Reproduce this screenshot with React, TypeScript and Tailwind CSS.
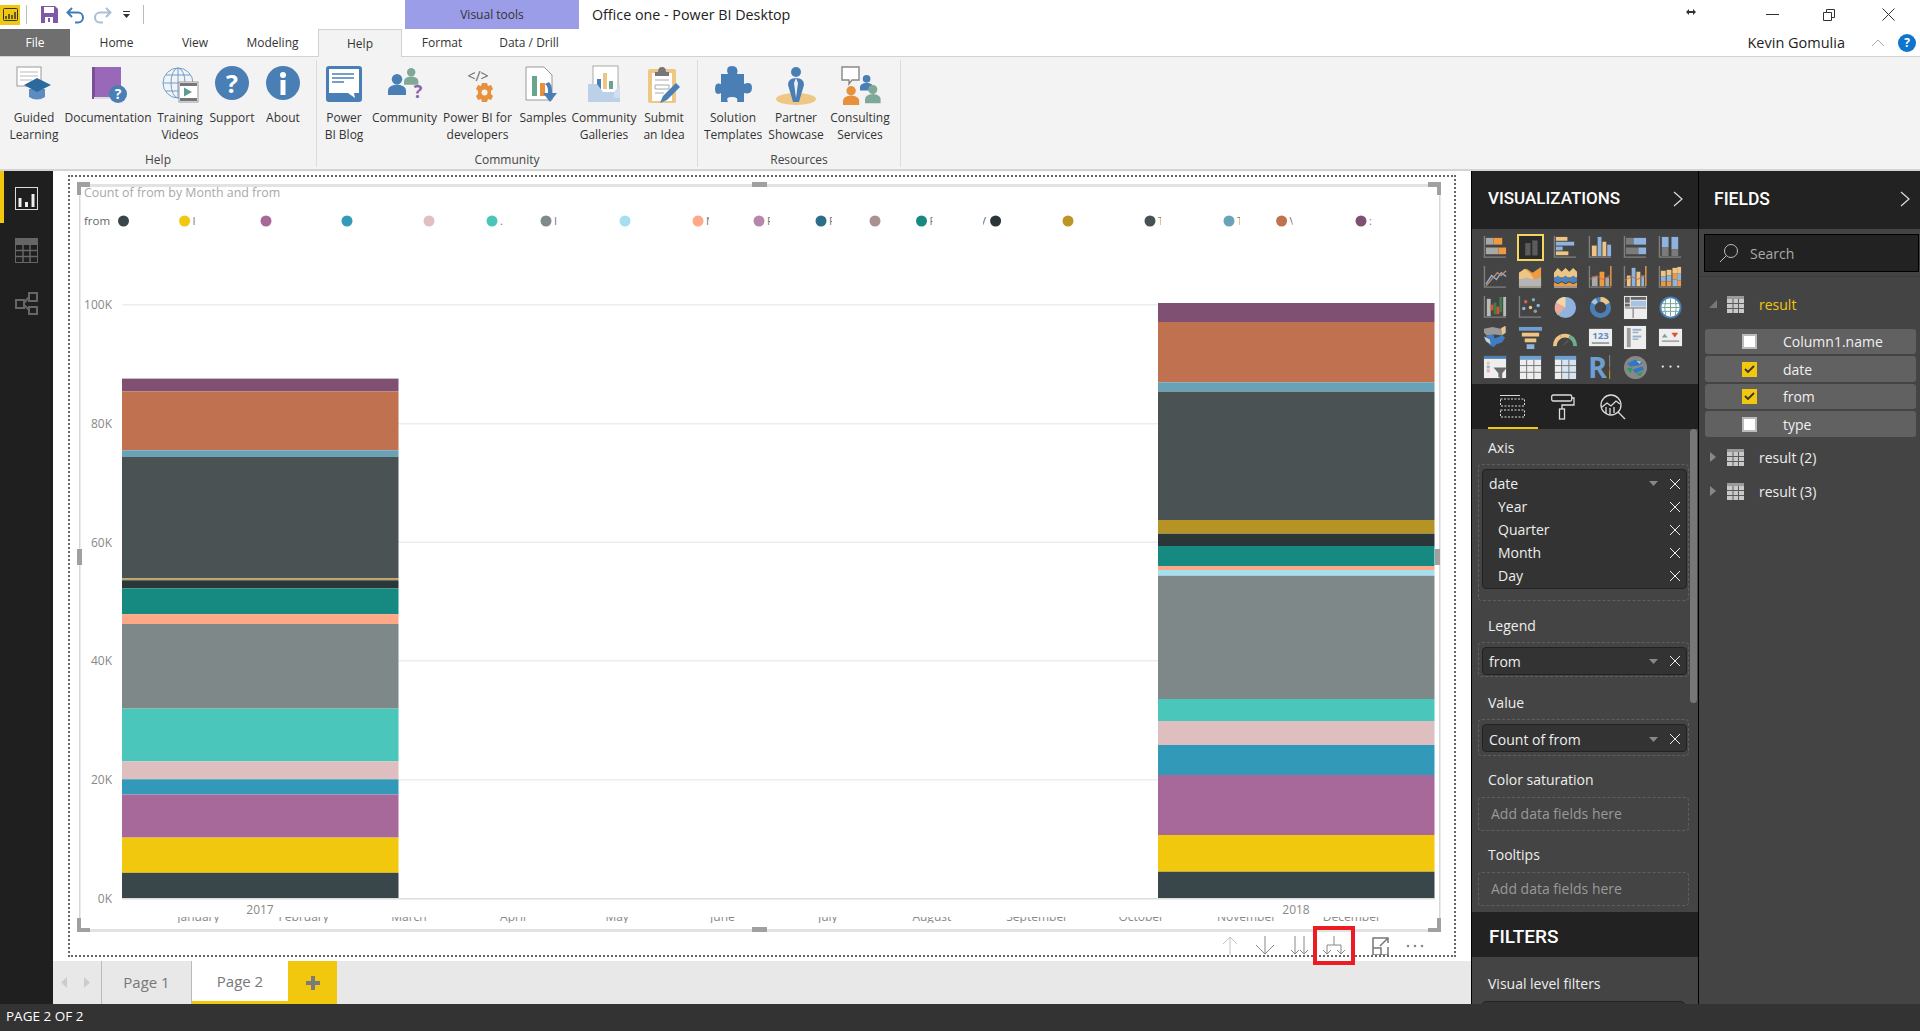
import React from "react";

const S = (p: { w: number; h?: number; v?: string; c?: string; children: React.ReactNode }) => (
  <svg width={p.w} height={p.h ?? p.w} viewBox={p.v ?? `0 0 ${p.w} ${p.h ?? p.w}`} className={`overflow-visible ${p.c ?? "block shrink-0"}`}>{p.children}</svg>
);

const BL = "#8db3de", TN = "#eec584", OR = "#ee9a41", GY = "#a8a8a8", DG = "#7b7b7b";
const Ax = () => <path d="M1.5 1V23H24" fill="none" stroke="#808080" strokeWidth="1.4" />;
const R = (x: number, y: number, w: number, h: number, f: string) => <rect x={x} y={y} width={w} height={h} fill={f} />;

const vizIcons: React.ReactNode[] = [
  <><Ax />{R(3, 3, 8, 7, GY)}{R(11, 3, 9, 7, OR)}{R(3, 13, 13, 7, GY)}{R(16, 13, 8, 7, OR)}</>,
  <>{R(7, 8, 6, 14, "#5c5c5c")}{R(15, 5, 6, 17, "#5c5c5c")}</>,
  <><Ax />{R(3, 2, 12, 4, TN)}{R(3, 7, 19, 4, BL)}{R(3, 12, 7, 4, BL)}{R(3, 17, 13, 4, TN)}</>,
  <><Ax />{R(4, 11, 5, 11, TN)}{R(10, 2, 4, 20, BL)}{R(15, 7, 4, 15, TN)}{R(20, 10, 4, 12, BL)}</>,
  <><Ax />{R(3, 3, 8, 7, DG)}{R(11, 3, 13, 7, BL)}{R(3, 13, 13, 7, DG)}{R(16, 13, 8, 7, BL)}</>,
  <><Ax />{R(4, 2, 7, 11, BL)}{R(4, 13, 7, 9, DG)}{R(14, 2, 7, 13, BL)}{R(14, 15, 7, 7, DG)}</>,
  <><Ax /><path d="M3 20 9 11l5 4 5-7 5 4" fill="none" stroke={BL} strokeWidth="1.4" /><path d="M3 22 9 15l6-7 4 3 5-5" fill="none" stroke="#c08a6b" strokeWidth="1.4" /></>,
  <>{R(1, 22, 23, 2, "#999")}<path d="M1 8 9 4l6 4 9-6v20H1z" fill={OR} /><path d="M1 8 7 4l6 5 4 6-16 0z" fill={TN} /><path d="M1 15 9 13l7 2 8-2v9H1z" fill="#b5b5b5" /></>,
  <>{R(1, 22, 24, 2, "#999")}<path d="M1 8 5 3l4 4 4-4 4 4 4-4 4 4v6H1z" fill={TN} /><path d="M1 14l4-3 4 3 4-3 4 3 4-3 4 3v3l-4 2-4-2-4 2-4-2-4 2-4-2z" fill="#4d82c0" /><path d="M1 18l4 2 4-2 4 2 4-2 4 2 4-2v4H1z" fill={OR} /></>,
  <><Ax />{R(4, 12, 6, 10, "#a9a9a9")}{R(12, 7, 5, 15, OR)}{R(18, 13, 4, 9, "#a9a9a9")}{R(23, 1, 1.5, 21, OR)}<path d="M2 15l7-4 6 4 8-4" fill="none" stroke="#c9694a" strokeWidth="1" /></>,
  <><Ax />{R(4, 11, 4, 11, TN)}{R(9, 3, 4, 19, BL)}{R(14, 7, 4, 15, TN)}{R(19, 11, 3, 11, BL)}{R(23, 1, 1.5, 21, OR)}<path d="M2 16l7-4 6 3 8-4" fill="none" stroke="#c9694a" strokeWidth="1" /></>,
  <><Ax />{R(3, 6, 5, 6, TN)}{R(3, 12, 5, 5, BL)}{R(3, 17, 5, 5, OR)}{R(9, 5, 5, 6, TN)}{R(9, 11, 5, 6, BL)}{R(9, 17, 5, 5, OR)}{R(15, 3, 5, 6, TN)}{R(15, 9, 5, 6, OR)}{R(15, 15, 5, 7, BL)}{R(20, 2, 4, 7, TN)}{R(20, 9, 4, 7, BL)}{R(20, 16, 4, 6, OR)}</>,
  <><Ax />{R(4, 4, 4, 18, "#bbb")}{R(8, 10, 3, 6, "#d9542e")}{R(11, 8, 3, 12, "#3e7e4d")}{R(14, 12, 3, 8, "#d9542e")}{R(17, 2, 3, 16, "#3e7e4d")}{R(21, 2, 3, 20, "#bbb")}</>,
  <><Ax /><circle cx="6" cy="14" r="1.8" fill={BL} /><circle cx="8" cy="7" r="1.8" fill="#d5654b" /><circle cx="13" cy="13" r="1.8" fill={TN} /><circle cx="16" cy="5" r="1.8" fill="#7fb09d" /><circle cx="18" cy="17" r="1.8" fill="#9a9a9a" /><circle cx="21" cy="11" r="1.8" fill={BL} /></>,
  <><circle cx="13" cy="13" r="11" fill={BL} /><path d="M13 13 13 2A11 11 0 0 0 3 8z" fill="#f3d6a6" /><path d="M13 13 3 8A11 11 0 0 0 5 21z" fill="#e9a99b" /></>,
  <><circle cx="13" cy="13" r="8.5" fill="none" stroke="#4a7fb8" strokeWidth="5" /><path d="M13 4.5a8.5 8.5 0 0 1 7.5 4.5" fill="none" stroke={TN} strokeWidth="5" /><path d="M5.5 9A8.5 8.5 0 0 1 9 5.5" fill="none" stroke="#a5c2e2" strokeWidth="5" /></>,
  <>{R(1, 1, 24, 24, "#eee")}{R(2, 2, 5, 6, "#666")}{R(8, 2, 16, 3, "#666")}{R(2, 9, 5, 3, "#666")}{R(8, 6, 16, 6, "#a6c3e2")}{R(2, 13, 22, 1, "#666")}{R(10, 14, 1, 10, "#666")}</>,
  <><circle cx="13" cy="13" r="11.5" fill="#4a7fb8" /><circle cx="13" cy="13" r="9.5" fill="#fff" /><path d="M4 9h18M3 13h20M4 17h18M13 4v18M8 5q-2 8 0 16M18 5q2 8 0 16" fill="none" stroke="#6ea995" strokeWidth="1" /></>,
  <><path d="M1 4l9-2 8 2 6-3v7l-4 3-8-1-8 1-3-3z" fill="#999" /><path d="M3 11l8-1 1 4 8-3 3 2-3 5-6 2-3 3-4-2-3-4z" fill="#3f7ec4" /><path d="M19 3l4-2v7l-3 2z" fill={TN} /><path d="M1 12l6 3 1 5-5-3z" fill="#cfcfcf" /></>,
  <>{R(1, 2, 24, 4, "#6f9fd0")}{R(4, 8, 18, 4, TN)}{R(7, 14, 12, 4, TN)}{R(9, 20, 8, 5, BL)}</>,
  <><path d="M2 22a11 11 0 0 1 6-10" fill="none" stroke={TN} strokeWidth="4" /><path d="M8 12a11 11 0 0 1 9 0" fill="none" stroke={TN} strokeWidth="4" /><path d="M17 12a11 11 0 0 1 6 10" fill="none" stroke="#71ab92" strokeWidth="4" /><path d="M11 21l5-5" stroke="#555" strokeWidth="2" /></>,
  <>{R(1, 4, 24, 18, "#eee")}<text x="13" y="15" textAnchor="middle" fontSize="10" fontWeight="700" fill="#5e8fc5" fontFamily="Open Sans, sans-serif">123</text>{R(4, 18, 18, 1.5, "#888")}</>,
  <>{R(1, 1, 23, 24, "#eee")}{R(4, 3, 4, 20, "#9c9c9c")}{R(10, 4, 9, 2, BL)}{R(10, 7, 6, 1.5, "#aaa")}{R(10, 11, 9, 2, BL)}{R(10, 14, 6, 1.5, "#aaa")}</>,
  <>{R(1, 4, 24, 18, "#eee")}<path d="M4 13l3-4 3 4z" fill="#6ea995" /><path d="M14 8h7l-3.5 5z" fill="#d9542e" />{R(4, 16, 18, 1.5, "#999")}</>,
  <>{R(1, 1, 23, 23, "#eee")}{R(1, 1, 23, 3, "#4a7fb8")}{R(4, 7, 3, 3, TN)}{R(4, 11, 3, 3, BL)}{R(4, 15, 3, 3, "#e9a99b")}<path d="M11 13h14l-5 6v6l-4-2v-4z" fill="#6b6b6b" /></>,
  <>{R(2, 1, 22, 24, "#eee")}{R(2, 1, 22, 4, "#6f9fd0")}<path d="M9 5v20M16.5 5v20M2 11h22M2 18h22" stroke="#777" strokeWidth="1" /></>,
  <>{R(2, 1, 22, 24, "#d7e4f2")}{R(2, 1, 22, 4, "#6f9fd0")}{R(2, 5, 7, 20, "#eee")}<path d="M9 5v20M16.5 5v20M2 11h22M2 18h22" stroke="#777" strokeWidth="1" /></>,
  <><text x="10" y="24" textAnchor="middle" fontSize="30" fontWeight="700" fill="#6f9fd0" fontFamily="Open Sans, sans-serif">R</text>{R(22, 0, 1, 13, "#888")}{R(22, 13, 1, 3, "#d9442e")}{R(22, 16, 1, 9, "#c89b22")}</>,
  <><circle cx="13" cy="13" r="12" fill="#888" /><path d="M4 9l8-4 9 3-5 3-8 1zM10 15l10-3 2 3-9 4z" fill="#2f78c4" /><path d="M4 14l6-1-2 6zM14 20l7-3-3 5z" fill="#2d9a5e" /><path d="M14 6l5 1-2 2z" fill="#ccc" /></>,
  <><circle cx="5" cy="12" r="1.2" fill="#eee" /><circle cx="13" cy="12" r="1.2" fill="#eee" /><circle cx="21" cy="12" r="1.2" fill="#eee" /></>,
];

const Person = ({ x, y, c, s = 1 }: { x: number; y: number; c: string; s?: number }) => (
  <g transform={`translate(${x} ${y}) scale(${s})`} fill={c}>
    <circle cx="6" cy="3.5" r="3.5" />
    <path d="M0 14V11q0-3.5 6-4 6 .5 6 4v3z" />
  </g>
);

const Q = ({ x, y, c = "#fff", z = 13 }: { x: number; y: number; c?: string; z?: number }) => (
  <text x={x} y={y} textAnchor="middle" fontSize={z} fontWeight="700" fill={c} fontFamily="Open Sans, sans-serif">?</text>
);

const ribbon = {
  guided: <><rect x="1" y="1" width="24" height="19" fill="#fff" stroke="#9a9a9a" /><path d="M4 6h18M4 10h18M4 14h12" stroke="#bbb" /><path d="M13 23v8q8 5 16 0v-8z" fill="#5c8cc2" /><path d="M8 19 21 12l14 7-14 7z" fill="#2d6a9c" /></>,
  docs: <><rect x="1" y="1" width="29" height="32" fill="#9a68b8" /><rect x="1" y="1" width="3" height="32" fill="#7b4f98" /><rect x="3" y="31" width="27" height="2" fill="#ddd" /><circle cx="27" cy="28" r="9" fill="#4a7fb5" /><Q x={27} y={33} z={14} /></>,
  training: <><g fill="none" stroke="#6f9fd0" strokeWidth="1"><circle cx="16" cy="17" r="15" /><ellipse cx="16" cy="17" rx="7" ry="15" /><path d="M1 17h30M4 9h24M4 25h24M16 2v30" /></g><rect x="17" y="16" width="19" height="20" fill="#fff" stroke="#999" /><rect x="18" y="17" width="17" height="3" fill="#777" /><rect x="18" y="32" width="17" height="3" fill="#777" /><path d="M22 21.5v9l8-4.5z" fill="#5c9e8c" /></>,
  support: <><circle cx="17" cy="17" r="17" fill="#4a7fb5" /><Q x={17} y={27} z={25} /></>,
  about: <><circle cx="17" cy="17" r="17" fill="#4a7fb5" /><circle cx="17" cy="9" r="3" fill="#fff" /><rect x="14.5" y="14" width="5" height="15" fill="#fff" /></>,
  blog: <><rect x="0" y="0" width="36" height="36" rx="3" fill="#4a7fb5" /><path d="M3 3h30v24h-5l1 5-7-5H3z" fill="#fff" /><path d="M6 8h22M6 12h22M6 16h12" stroke="#4a7fb5" strokeWidth="1.4" /></>,
  community: <><Person x={17} y={2} c="#7fa898" s={1.2} /><Person x={1} y={8} c="#4a7fb5" s={1.5} /><Q x={31} y={32} c="#8b5fae" z={18} /></>,
  dev: <><text x="18" y="15" textAnchor="middle" fontSize="14" fill="#666" fontFamily="Open Sans, sans-serif">&lt;/&gt;</text><path d="M22 17h5l1 3 3-1 2 4-2 2v3l2 2-2 4-3-1-1 3h-5l-1-3-3 1-2-4 2-2v-3l-2-2 2-4 3 1z" fill="#e8913c" /><circle cx="24.5" cy="26.5" r="3" fill="#f3f3f3" /></>,
  samples: <><path d="M1 1h18l8 8v25H1z" fill="#fff" stroke="#999" /><rect x="7" y="10" width="5" height="20" fill="#6aa48e" /><rect x="15" y="17" width="5" height="13" fill="#e8913c" /><path d="M24 16q3 3 3 9v2h5l-7 9-7-9h5v-2q0-5-3-7z" fill="#4a7fb5" /></>,
  gallery: <><rect x="5" y="0" width="25" height="28" fill="#fff" stroke="#aaa" /><rect x="9" y="13" width="4" height="10" fill="#4a7fb5" /><rect x="15" y="7" width="4" height="16" fill={TN} /><rect x="21" y="15" width="4" height="8" fill="#6aa48e" /><path d="M0 18h9l6 8h17v10H0z" fill="#bcd0e8" /><path d="M26 32V26l6-7v13z" fill="#cfdff0" /></>,
  idea: <><rect x="0" y="3" width="28" height="34" rx="2" fill="#eec784" /><rect x="4" y="7" width="20" height="28" fill="#fff" /><path d="M7 6h3q0-5 4-5t4 5h3v4H7z" fill="#777" /><path d="M7 14h14M7 19h14v4H7zM7 27h9" fill="none" stroke="#aaa" /><path d="M12 37l3-7 13-13 4 4-13 13z" fill="#4a7fb5" /></>,
  puzzle: <path d="M6 8h7q-3-8 4-8t5 8h7v10q8-3 8 4t-8 5v9h-7q2-5-5-5t-4 5H6v-9q-6 3-6-4t6-5z" fill="#4a7fb5" />,
  partner: <><ellipse cx="20" cy="33" rx="20" ry="6" fill="#eec784" /><circle cx="20" cy="6" r="5" fill="#4a7fb5" /><path d="M12 19q0-7 8-7t8 7l-3 10-2 7h-6l-2-7z" fill="#4a7fb5" /><path d="M20 12l-2 5 2 15 2-15z" fill="#eaf0f6" /></>,
  consulting: <><path d="M1 1h17v13h-7l-3 4v-4H1z" fill="#fff" stroke="#888" strokeWidth="1.4" transform="translate(1 0)" /><Person x={20} y={9} c="#4a7fb5" s={1.1} /><Person x={3} y={20} c="#e8913c" s={1.35} /><Person x={25} y={19} c="#7fa898" s={1.3} /></>,
};

const RI = ({ w, l, i, vw = 36 }: { w: string; l: string[]; i: React.ReactNode; vw?: number }) => (
  <div className={`${w} flex flex-col items-center shrink-0`}>
    <S w={40} h={38} v={`${(vw - 40) / 2} 0 40 38`}>{i}</S>
    <div className="mt-[5px] text-center leading-[17px] text-[12px] text-[#333] whitespace-nowrap">
      {l.map((t) => <div key={t}>{t}</div>)}
    </div>
  </div>
);

const Group = ({ name, w, children }: { name: string; w: string; children: React.ReactNode }) => (
  <div className={`${w} h-full flex flex-col shrink-0 border-r border-[#dcdcdc]`}>
    <div className="flex h-[90px] pt-[6px] shrink-0">{children}</div>
    <div className="text-center text-[12px] leading-[19px] text-[#444] shrink-0">{name}</div>
  </div>
);

const Tab = ({ w, children }: { w: string; children: React.ReactNode }) => (
  <div className={`${w} h-full flex items-center justify-center text-[12px] text-[#333] shrink-0`}>{children}</div>
);

const Xx = ({ c = "#eee" }: { c?: string }) => (
  <S w={12}><path d="M1 1l10 10M11 1 1 11" stroke={c} strokeWidth="1" /></S>
);
const Caret = () => <S w={9} h={5}><path d="M0 0h9L4.500 5z" fill="#888" /></S>;
const Chevron = ({ c }: { c: string }) => (
  <S w={10} h={16} c={c}><path d="M1 1l8 7-8 7" fill="none" stroke="#ddd" strokeWidth="1.2" /></S>
);

const Pill = ({ t, caret, sub, first }: { t: string; caret?: boolean; sub?: boolean; first?: boolean }) => (
  <div className={`${sub ? "h-[23px] pl-[15px]" : first ? "h-[23px] pl-[6px]" : "h-[24px] pl-[6px]"} flex items-center pr-[5px] text-[14px] text-[#eee]`}>
    <span className="flex-1 whitespace-nowrap">{t}</span>
    {caret && <span className="mr-[11px]"><Caret /></span>}
    <Xx />
  </div>
);

const WellLabel = ({ t, mt }: { t: string; mt: string }) => (
  <div className={`${mt} pl-[16px] h-[22px] leading-[22px] text-[14px] text-[#eee] whitespace-nowrap`}>{t}</div>
);

const Well = ({ children, pb }: { children: React.ReactNode; pb: string }) => (
  <div className={`mt-[5px] ml-[6px] w-[211px] border border-dashed border-[#5f5f5f] rounded-[4px] pl-[3px] pr-[1px] pt-[4px] ${pb}`}>
    <div className="bg-[#333] border border-[#222] rounded-[4px]">{children}</div>
  </div>
);

const Empty = ({ mt }: { mt: string }) => (
  <div className={`${mt} ml-[6px] w-[211px] h-[34px] border border-dashed border-[#5f5f5f] rounded-[4px] pl-[12px] pb-[2px] flex items-center text-[14px] text-[#999]`}>Add data fields here</div>
);

const TableIcon = () => (
  <S w={17}>
    <rect x="0" y="0" width="17" height="17" fill="#c9c9c9" />
    <rect x="0" y="0" width="17" height="3" fill="#9a9a9a" />
    <path d="M6 3v14M11.500 3v14M0 7.500h17M0 12.500h17" stroke="#5a5a5a" strokeWidth="1" />
  </S>
);

const Field = ({ t, on, h, mb }: { t: string; on?: boolean; h: string; mb: string }) => (
  <div className={`${h} ${mb} ml-[6px] w-[211px] bg-[#616161] rounded-[3px] flex items-center pl-[37px] text-[14px] text-[#f0f0f0]`}>
    {on ? (
      <span className="w-[15px] h-[15px] bg-[#f2c80f] flex items-center justify-center shrink-0">
        <S w={11} h={9}><path d="M1 4l3 3 6-6" fill="none" stroke="#333" strokeWidth="1.8" /></S>
      </span>
    ) : (
      <span className="w-[15px] h-[15px] bg-white border-2 border-[#bbb] shrink-0" />
    )}
    <span className="ml-[26px] whitespace-nowrap">{t}</span>
  </div>
);

const TreeRow = ({ t, open, y }: { t: string; open?: boolean; y: string }) => (
  <div className={`${y} h-[24px] flex items-center text-[14px] ${open ? "text-[#f2c80f]" : "text-[#eee]"}`}>
    <span className={`w-[28px] ${open ? "pl-[10px]" : "pl-[11px]"}`}>
      {open ? <S w={8}><path d="M8 0v8H0z" fill="#777" /></S> : <S w={6} h={10}><path d="M0 0l6 5-6 5z" fill="#888" /></S>}
    </span>
    <TableIcon />
    <span className="ml-[15px] whitespace-nowrap">{t}</span>
  </div>
);

const segs2017: [number, string][] = [[378.6, "#7f5072"], [391.4, "#bf7150"], [450.3, "#69a1b6"], [456.9, "#4a5254"], [578.3, "#b8a35c"], [580.3, "#2b3638"], [588.3, "#168980"], [614.1, "#fda988"], [624, "#7f8889"], [708.6, "#4ac6bb"], [761.4, "#dfbebf"], [779.3, "#3399b9"], [794.5, "#a66999"], [837.6, "#f2c80f"], [872.8, "#39474b"]];
const segs2018: [number, string][] = [[303, "#7f5072"], [322, "#bf7150"], [382.3, "#69a1b6"], [391.7, "#4a5254"], [520, "#b59325"], [533.7, "#2b3638"], [546, "#168980"], [566, "#fda988"], [570, "#a5dff0"], [575.7, "#7f8889"], [699, "#4ac6bb"], [721, "#dfbebf"], [745, "#3399b9"], [775, "#a66999"], [835, "#f2c80f"], [871.7, "#39474b"]];

const dots: [number, string, string?][] = [[123.5, "#374649"], [184.6, "#f2c80f", "I"], [266, "#a66999"], [347, "#3599b8"], [429, "#dfbfbf"], [492, "#4ac5bb", "."], [546, "#7e8a8b", "I"], [625, "#a5dff0"], [698, "#fea987", "N"], [759, "#b787ab", "F"], [821, "#2a6e8a", "F"], [875, "#a99191"], [921.5, "#168980", "F"], [995.6, "#293537"], [1068, "#bb9626"], [1150, "#475052", "T"], [1229, "#6aa2b8", "T"], [1281.6, "#c0724f", "V"], [1361, "#7f5072", ":"]];
const months = [[162, "January"], [248, "February"], [334, "March"], [419, "April"], [504, "May"], [590, "June"], [676, "July"], [761, "August"], [847, "September"], [932, "October"], [1018, "November"], [1104, "December"]] as [number, string][];

const bars = (segs: [number, string][], x: number, bottom: number) =>
  segs.map(([y, c], i) => {
    const next = i + 1 < segs.length ? segs[i + 1][0] : bottom;
    return <rect key={x + "-" + i} x={x} y={y} width={276.500} height={next - y} fill={c} />;
  });

const hc = "#a0a0a0";
const Chart = () => (
  <svg width="1384" height="778" viewBox="70 177 1384 778" className="block" fontFamily="Open Sans, sans-serif">
    <defs>
      <clipPath id="mclip"><rect x="100" y="917" width="1340" height="6" /></clipPath>
      {dots.map(([x], i) => <clipPath key={x} id={`lg${i}`}><rect x={x + 7.500} y="214" width="3.500" height="14" /></clipPath>)}
      <clipPath id="lgs"><rect x="983" y="214" width="4" height="14" /></clipPath>
    </defs>
    <rect x="79" y="184" width="1361" height="3" fill="#e2e2e2" />
    <rect x="79" y="929" width="1361" height="3" fill="#e2e2e2" />
    <rect x="79" y="184" width="1.500" height="748" fill="#d8d8d8" />
    <rect x="1439" y="184" width="1.500" height="748" fill="#d8d8d8" />
    <path d="M77 195V182H90V187H81V195zM1441 195V182H1428V187H1437V195zM77 918V932H90V928H81V918zM1441 918V932H1428V928H1437V918z" fill={hc} />
    <rect x="752" y="182" width="15" height="5" fill={hc} />
    <rect x="752" y="927" width="15" height="5" fill={hc} />
    <rect x="77" y="549" width="5" height="16" fill={hc} />
    <rect x="1435" y="549" width="5" height="16" fill={hc} />

    <text x="84" y="196.500" fontSize="12.400" fill="#a8a8a8">Count of from by Month and from</text>
    <text x="84" y="225" fontSize="11.500" fontWeight="500" fill="#666">from</text>
    {dots.map(([x, c, f], i) => (
      <g key={x}>
        <circle cx={x} cy="221" r="5.500" fill={c} />
        {f && <text x={x + 8} y="225" fontSize="11" fill="#777" clipPath={`url(#lg${i})`}>{f}</text>}
      </g>
    ))}
    <text x="982" y="225" fontSize="11" fill="#557" clipPath="url(#lgs)">/</text>
    {[304, 423, 541.500, 660, 779].map((y) => <rect key={y} x="122" y={y} width="1313" height="1.500" fill="#ededed" />)}
    {[[304, "100K"], [423, "80K"], [542, "60K"], [660, "40K"], [779, "20K"], [898, "0K"]].map(([y, t]) => (
      <text key={t} x="112" y={(y as number) + 4.500} textAnchor="end" fontSize="12" fill="#888">{t}</text>
    ))}
    {bars(segs2017, 122, 898.500)}
    {bars(segs2018, 1158, 898.500)}
    <rect x="122" y="898" width="1313" height="1.500" fill="#dcdcdc" />
    <text x="260" y="914" textAnchor="middle" fontSize="12" fill="#888">2017</text>
    <text x="1296" y="914" textAnchor="middle" fontSize="12" fill="#888">2018</text>
    <g clipPath="url(#mclip)">
      {months.map(([x, t]) => <text key={t} x={x * 1.2245} y="921" textAnchor="middle" fontSize="12" fill="#888">{t}</text>)}
    </g>
    <g fill="none" strokeWidth="1">
      <path d="M1230 955V937M1223 944l7-7 7 7" stroke="#c4c4c4" />
      <path d="M1265 936V954M1256 945l9 9 9-9" stroke="#888" />
      <path d="M1295 936V954M1304 936V954M1291 950l4 4 4-4M1300 950l4 4 4-4" stroke="#888" />
      <path d="M1334 936V945M1327 945H1341V954M1327 945V954M1323 950l4 4 4-4M1337 950l4 4 4-4" stroke="#888" />
      <path d="M1388 938h-15v17h15V947M1373 948h8v7M1380 946l7-7M1383 938h5v5" stroke="#777" strokeWidth="1.500" />
    </g>
    <g fill="#888"><circle cx="1408" cy="946" r="1.300" /><circle cx="1415" cy="946" r="1.300" /><circle cx="1422" cy="946" r="1.300" /></g>
  </svg>
);

export default function App() {
  return (
    <div className="w-[1920px] h-[1031px] overflow-hidden flex flex-col bg-white font-['Open_Sans',sans-serif]">
      {/* Title bar */}
      <div className="h-[29px] flex items-stretch shrink-0">
        <div className="w-[405px] flex items-center shrink-0">
          <div className="w-[20px] h-[20px] bg-[#f2c80f] flex items-center justify-center">
            <S w={15}><rect x=".5" y="1.500" width="14" height="12" rx="1" fill="none" stroke="#333" /><path d="M3 12V9M6 12V7M9 12V8M12 12V5" stroke="#333" strokeWidth="1.500" /></S>
          </div>
          <div className="ml-[6px] w-px h-[19px] bg-[#bbb]" />
          <S w={17} c="block shrink-0 ml-[14px]"><path d="M0 0h14l3 3v14H0z" fill="#8058a8" /><rect x="3" y="1" width="10" height="6" fill="#fff" /><rect x="4" y="11" width="8" height="6" fill="#fff" /><rect x="7" y="12" width="2" height="4" fill="#8058a8" /></S>
          <S w={19} h={18} c="block shrink-0 ml-[8px]"><path d="M6 2 1.500 6.500 6 11M2 6.500H12a5 5 0 0 1 0 10H9" fill="none" stroke="#3d7db8" strokeWidth="2" /></S>
          <S w={19} h={18} c="block shrink-0 ml-[8px]"><path d="M13 2l4.500 4.500L13 11M17 6.500H7a5 5 0 0 0 0 10h3" fill="none" stroke="#a9bfd6" strokeWidth="2" /></S>
          <S w={7} h={7} c="block shrink-0 ml-[11px]"><path d="M0 0h7v1H0zM0 3h7L3.500 7z" fill="#333" /></S>
          <div className="ml-[13px] w-px h-[19px] bg-[#bbb]" />
        </div>
        <div className="w-[174px] bg-[#9b9de9] flex items-center justify-center text-[12px] text-[#333] shrink-0">Visual tools</div>
        <div className="ml-[13px] flex items-center text-[14.300px] text-[#222] whitespace-nowrap">Office one - Power BI Desktop</div>
        <div className="flex-1" />
        <div className="flex items-center pb-[5px] mr-[70px]"><S w={10} h={6}><path d="M0 3l3-3v2h4V0l3 3-3 3V4H3v2z" fill="#333" /></S></div>
        <div className="flex items-center mr-[44px]"><S w={13} h={2}><rect width="13" height="1" fill="#333" /></S></div>
        <div className="flex items-center mr-[47px]"><S w={12}><path d="M.5 3.500h8v8h-8zM3.500 3V.5h8v8H9" fill="none" stroke="#333" /></S></div>
        <div className="flex items-center mr-[25px]"><S w={13}><path d="M.5.5l12 12M12.500.5l-12 12" stroke="#333" /></S></div>
      </div>

      {/* Tabs */}
      <div className="h-[28px] flex items-stretch shrink-0 border-b border-[#d2d2d2] relative">
        <div className="w-[70px] bg-[#6f6f6f] text-white text-[12px] flex items-center justify-center shrink-0">File</div>
        <Tab w="w-[93px]">Home</Tab>
        <Tab w="w-[64px]">View</Tab>
        <Tab w="w-[91px]">Modeling</Tab>
        <div className="w-[84px] h-[28px] bg-[#f3f3f3] border-x border-t border-[#d2d2d2] text-[12px] text-[#333] flex items-center justify-center shrink-0">Help</div>
        <div className="w-[3px]" />
        <Tab w="w-[74px]">Format</Tab>
        <Tab w="w-[100px]">Data / Drill</Tab>
        <div className="flex-1 flex items-center justify-end text-[14.500px] text-[#222]">
          <span className="mr-[26px] whitespace-nowrap">Kevin Gomulia</span>
          <S w={14} h={8} c="block shrink-0 mr-[13px]"><path d="M1 7l6-6 6 6" fill="none" stroke="#aaa" /></S>
          <S w={18} c="block shrink-0 mr-[4px]"><circle cx="9" cy="9" r="9" fill="#0f74cc" /><Q x={9} y={13} z={12} /></S>
        </div>
      </div>

      {/* Ribbon */}
      <div className="h-[114px] shrink-0 bg-[#f3f3f3] border-b-2 border-[#d4d4d4] flex pt-[3px] pb-[2px]">
        <Group name="Help" w="w-[317px]">
          <RI w="w-[68px]" l={["Guided", "Learning"]} i={ribbon.guided} />
          <RI w="w-[80px]" l={["Documentation"]} i={ribbon.docs} vw={34} />
          <RI w="w-[64px]" l={["Training", "Videos"]} i={ribbon.training} />
          <RI w="w-[40px]" l={["Support"]} i={ribbon.support} vw={34} />
          <RI w="w-[62px]" l={["About"]} i={ribbon.about} vw={34} />
        </Group>
        <Group name="Community" w="w-[381px]">
          <RI w="w-[54px]" l={["Power", "BI Blog"]} i={ribbon.blog} />
          <RI w="w-[67px]" l={["Community"]} i={ribbon.community} />
          <RI w="w-[79px]" l={["Power BI for", "developers"]} i={ribbon.dev} />
          <RI w="w-[52px]" l={["Samples"]} i={ribbon.samples} />
          <RI w="w-[70px]" l={["Community", "Galleries"]} i={ribbon.gallery} vw={32} />
          <RI w="w-[50px]" l={["Submit", "an Idea"]} i={ribbon.idea} vw={32} />
        </Group>
        <Group name="Resources" w="w-[203px]">
          <RI w="w-[70px]" l={["Solution", "Templates"]} i={ribbon.puzzle} />
          <RI w="w-[56px]" l={["Partner", "Showcase"]} i={ribbon.partner} vw={40} />
          <RI w="w-[72px]" l={["Consulting", "Services"]} i={ribbon.consulting} vw={40} />
        </Group>
      </div>

      {/* Main */}
      <div className="h-[833px] flex shrink-0">
        {/* Rail */}
        <div className="w-[53px] bg-[#1f1f1f] shrink-0">
          <div className="h-[52px] border-l-4 border-[#f2c80f] pl-[11px] pt-[16px]">
            <S w={23}><rect x=".5" y=".5" width="22" height="22" fill="none" stroke="#ddd" /><path d="M5 20v-9M11.500 20v-5M18 20V7" stroke="#eee" strokeWidth="3" /></S>
          </div>
          <div className="pl-[15px] pt-[15px]">
            <S w={23} h={25}><rect width="23" height="25" fill="#666" /><path d="M1 7h21v17H1z" fill="#1f1f1f" /><path d="M8 6v18M15 6v18M1 12.500h21M1 18.500h21" stroke="#666" strokeWidth="1.500" /></S>
          </div>
          <div className="pl-[15px] pt-[29px]">
            <S w={23}><g fill="none" stroke="#666" strokeWidth="2"><rect x="1" y="8" width="8" height="8" /><rect x="14" y="1" width="8" height="8" /><rect x="14" y="15" width="8" height="7" /><path d="M9 11l5-6M9 13l5 5" /></g></S>
          </div>
        </div>

        {/* Canvas */}
        <div className="w-[1418px] shrink-0 flex flex-col relative">
          <div className="h-[790px] bg-white pt-[4px] pl-[15px] shrink-0">
            <div className="w-[1388px] h-[782px] border-2 border-dotted border-[#666]">
              <Chart />
            </div>
          </div>
          <div className="flex-1 bg-[#e8e8e8] flex items-stretch text-[15px] text-[#777] font-medium">
            <div className="w-[49px] border-r border-[#bbb] flex items-center gap-[17px] pl-[8px]">
              <S w={6} h={11}><path d="M6 0 0 5.500 6 11z" fill="#ccc" /></S>
              <S w={6} h={11}><path d="M0 0l6 5.500L0 11z" fill="#ccc" /></S>
            </div>
            <div className="w-[90px] border-r border-[#bbb] flex items-center justify-center">Page 1</div>
            <div className="w-[96px] bg-white border-b-[3px] border-[#f2c80f] flex items-center justify-center">Page 2</div>
            <div className="w-[49px] bg-[#f2c80f] flex items-center justify-center">
              <S w={14}><path d="M5 0h4v5h5v4H9v5H5V9H0V5h5z" fill="#7a7a7a" /></S>
            </div>
          </div>
          <div className="absolute left-[1260px] top-[755px] w-[42px] h-[39px] border-4 border-[#ed1c24]" />
        </div>

        {/* Visualizations */}
        <div className="w-[228px] shrink-0 bg-[#444] border-x border-black flex flex-col">
          <div className="h-[58px] bg-[#222] flex items-center pl-[16px] pb-[2px] text-[17px] font-['Roboto',sans-serif] font-medium text-white shrink-0">
            <span className="flex-1 whitespace-nowrap">VISUALIZATIONS</span>
            <Chevron c="block shrink-0 mr-[15px]" />
          </div>
          <div className="h-[155px] grid grid-cols-[repeat(6,35px)] auto-rows-[30px] pl-[6px] pt-[3px] shrink-0">
            {vizIcons.map((ic, i) => (
              <div key={i} className="flex items-center justify-center">
                <div className={i === 1 ? "w-[27px] h-[27px] border-2 border-[#f4d65e] bg-[#2b2b2b] flex items-center justify-center" : ""}>
                  <S w={i === 1 ? 23 : 25} h={i === 1 ? 23 : 25} v="0 0 26 26">{ic}</S>
                </div>
              </div>
            ))}
          </div>
          <div className="h-[45px] bg-[#222] flex items-center relative shrink-0">
            <S w={25} h={24} c="block shrink-0 ml-[28px]"><g fill="none" stroke="#ddd" strokeDasharray="2 1.500"><rect x=".5" y="4" width="24" height="7" /><rect x=".5" y="15" width="24" height="7" /></g><path d="M0 .5h20" stroke="#ddd" /></S>
            <S w={24} h={26} c="block shrink-0 ml-[26px]"><g fill="none" stroke="#ddd" strokeWidth="1.300"><rect x=".7" y="1" width="20" height="6" rx="1.500" /><path d="M21 4h2v7H11v4" /><rect x="8.500" y="15" width="5" height="10" /></g></S>
            <S w={26} c="block shrink-0 ml-[25px]"><g fill="none" stroke="#ddd" strokeWidth="1.300"><circle cx="11" cy="11" r="10" /><path d="M18 18l7 7M2 13l5-4 4 3 5-5 4 3" /><path d="M6 13v6M10 14v6M14 13v6" /></g></S>
            <div className="absolute left-[16px] bottom-0 w-[50px] h-[2px] bg-[#f2c80f]" />
          </div>
          <div className="flex-1 relative pt-[8px] overflow-hidden">
            <div className="absolute right-[1px] top-0 w-[7px] h-[274px] rounded-full bg-[#777]" />
            <WellLabel t="Axis" mt="" />
            <Well pb="pb-[11px]">
              <div className="pt-[2px] pb-[1px]">
                <Pill t="date" caret first />
                <Pill t="Year" sub />
                <Pill t="Quarter" sub />
                <Pill t="Month" sub />
                <Pill t="Day" sub />
              </div>
            </Well>
            <WellLabel t="Legend" mt="mt-[14px]" />
            <Well pb="pb-[1px]"><div className="py-[1px]"><Pill t="from" caret /></div></Well>
            <WellLabel t="Value" mt="mt-[15px]" />
            <Well pb="pb-[3px]"><div className="pt-[2px]"><Pill t="Count of from" caret /></div></Well>
            <WellLabel t="Color saturation" mt="mt-[13px]" />
            <Empty mt="mt-[6px]" />
            <WellLabel t="Tooltips" mt="mt-[13px]" />
            <Empty mt="mt-[6px]" />
          </div>
          <div className="h-[45px] bg-[#222] flex items-center pl-[17px] pt-[6px] text-[19px] font-['Roboto',sans-serif] font-medium text-white shrink-0">FILTERS</div>
          <div className="h-[47px] overflow-hidden shrink-0">
            <WellLabel t="Visual level filters" mt="mt-[16px]" />
            <div className="mt-[6px] ml-[10px] w-[203px] h-[20px] bg-[#333] border border-[#222] rounded-[4px]" />
          </div>
        </div>

        {/* Fields */}
        <div className="flex-1 bg-[#444] flex flex-col">
          <div className="h-[58px] bg-[#222] flex items-center pl-[15px] pb-[2px] text-[17.500px] font-['Roboto',sans-serif] font-medium text-white shrink-0">
            <span className="flex-1">FIELDS</span>
            <Chevron c="block shrink-0 mr-[10px]" />
          </div>
          <div className="h-[48px] border-b border-[#3a3a3a] pt-[5px] pl-[5px] shrink-0">
            <div className="w-[215px] h-[38px] bg-[#222] border border-black flex items-center pl-[14px] text-[14px] text-[#aaa]">
              <S w={20} c="block shrink-0 mr-[11px]"><circle cx="12" cy="8" r="6.500" fill="none" stroke="#bbb" /><path d="M7.500 12.500 1 19" stroke="#bbb" /></S>
              Search
            </div>
          </div>
          <TreeRow t="result" open y="mt-[15px]" />
          <div className="mt-[13px]">
            <Field t="Column1.name" h="h-[25px]" mb="mb-[2px]" />
            <Field t="date" on h="h-[26px]" mb="mb-[2px]" />
            <Field t="from" on h="h-[25px]" mb="mb-[2px]" />
            <Field t="type" h="h-[26px]" mb="" />
          </div>
          <TreeRow t="result (2)" y="mt-[8px]" />
          <TreeRow t="result (3)" y="mt-[10px]" />
        </div>
      </div>

      {/* Status */}
      <div className="h-[27px] bg-[#333] flex items-center pl-[6px] pb-[2px] text-[13.500px] text-white shrink-0">PAGE 2 OF 2</div>
    </div>
  );
}
